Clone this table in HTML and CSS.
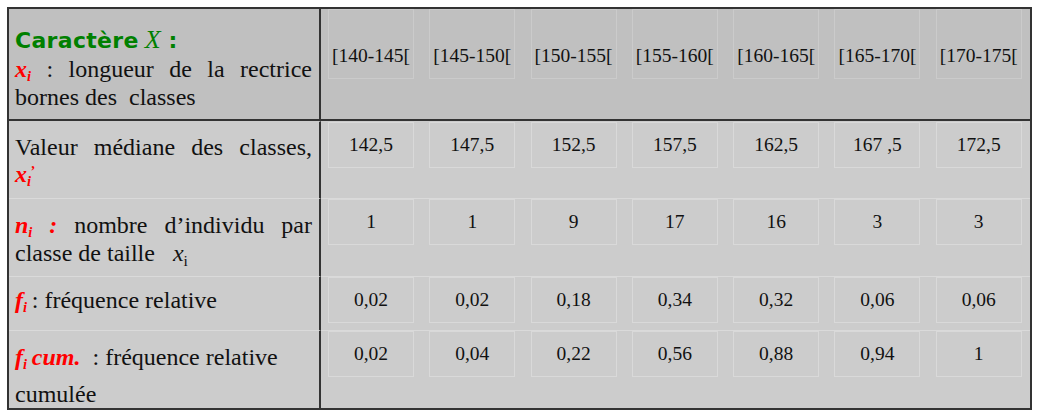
FILE: index.html
```html
<!DOCTYPE html>
<html lang="fr">
<head>
  <meta charset="UTF-8">
  <title>Caractère X</title>
  <link rel="stylesheet" href="styles.css">
</head>
<body>
  <div class="sheet">
    <!-- en-tete : bornes des classes -->
    <div class="cell label head">
      <div class="line title"><span class="comic">Caractère</span> <i class="var-x">X</i><span class="comic"> :</span></div>
      <div class="line fill"><b class="sym">x<sub>i</sub></b> : longueur de la rectrice</div>
      <div class="line">bornes des&nbsp; classes</div>
    </div>
    <div class="cell head"><div class="box">[140-145[</div></div>
    <div class="cell head"><div class="box">[145-150[</div></div>
    <div class="cell head"><div class="box">[150-155[</div></div>
    <div class="cell head"><div class="box">[155-160[</div></div>
    <div class="cell head"><div class="box">[160-165[</div></div>
    <div class="cell head"><div class="box">[165-170[</div></div>
    <div class="cell head"><div class="box">[170-175[</div></div>

    <!-- valeur mediane -->
    <div class="cell label first mid">
      <div class="line fill">Valeur médiane des classes,</div>
      <div class="line"><b class="sym">x<sub>i</sub><sup>’</sup></b></div>
    </div>
    <div class="cell first"><div class="box">142,5</div></div>
    <div class="cell first"><div class="box">147,5</div></div>
    <div class="cell first"><div class="box">152,5</div></div>
    <div class="cell first"><div class="box">157,5</div></div>
    <div class="cell first"><div class="box">162,5</div></div>
    <div class="cell first"><div class="box">167 ,5</div></div>
    <div class="cell first"><div class="box">172,5</div></div>

    <!-- effectifs -->
    <div class="cell label">
      <div class="line fill"><b class="sym">n<sub>i</sub> :</b> nombre d’individu par</div>
      <div class="line">classe de taille&nbsp;&nbsp; <i>x</i><sub class="plain">i</sub></div>
    </div>
    <div class="cell"><div class="box">1</div></div>
    <div class="cell"><div class="box">1</div></div>
    <div class="cell"><div class="box">9</div></div>
    <div class="cell"><div class="box">17</div></div>
    <div class="cell"><div class="box">16</div></div>
    <div class="cell"><div class="box">3</div></div>
    <div class="cell"><div class="box">3</div></div>

    <!-- frequence relative -->
    <div class="cell label short">
      <div class="line"><b class="sym">f<sub>i</sub></b>&thinsp;: fréquence relative</div>
    </div>
    <div class="cell"><div class="box">0,02</div></div>
    <div class="cell"><div class="box">0,02</div></div>
    <div class="cell"><div class="box">0,18</div></div>
    <div class="cell"><div class="box">0,34</div></div>
    <div class="cell"><div class="box">0,32</div></div>
    <div class="cell"><div class="box">0,06</div></div>
    <div class="cell"><div class="box">0,06</div></div>

    <!-- frequence cumulee -->
    <div class="cell label tall">
      <div class="line"><b class="sym">f<sub>i</sub>&thinsp;cum.</b> &nbsp;: fréquence relative</div>
      <div class="line">cumulée</div>
    </div>
    <div class="cell"><div class="box">0,02</div></div>
    <div class="cell"><div class="box">0,04</div></div>
    <div class="cell"><div class="box">0,22</div></div>
    <div class="cell"><div class="box">0,56</div></div>
    <div class="cell"><div class="box">0,88</div></div>
    <div class="cell"><div class="box">0,94</div></div>
    <div class="cell"><div class="box">1</div></div>
  </div>
</body>
</html>
```

FILE: styles.css
```css
body {
  margin: 0;
  background: #fff;
  font-family: "Liberation Serif", "Times New Roman", serif;
  color: #111;
}
.sheet {
  box-sizing: border-box;
  width: 1025px;
  margin: 7px 0 0 7px;
  border: 2px solid #333;
  background: #ccc;
  display: grid;
  grid-template-columns: 312px repeat(7, 1fr);
  grid-template-rows: 112px 77px 78px 54px 78px;
}
.cell {
  box-sizing: border-box;
  border-top: 1px solid #dadada;
}
.cell.first {
  border-top-color: #ccc;
}
.head {
  background: #c0c0c0;
  border-top: 0;
  border-bottom: 2px solid #333;
}
.label {
  border-right: 2px solid #333;
  padding: 12px 7px 0 6px;
  font-size: 24px;
  line-height: 28px;
}
.label.head {
  padding-top: 17px;
}
.label.mid {
  line-height: 27px;
}
.label.short {
  padding-top: 9px;
}
.label.tall {
  padding-top: 8px;
  line-height: 37px;
}
.line {
  white-space: nowrap;
}
.fill {
  text-align: justify;
  text-align-last: justify;
}
.title {
  color: #008000;
}
.comic {
  font-family: "DejaVu Sans", sans-serif;
  font-weight: bold;
  font-size: 22px;
  letter-spacing: 0.3px;
}
.var-x {
  font-size: 26px;
}
.sym {
  color: #f00;
  font-style: italic;
}
sub, sup {
  line-height: 0;
  font-size: 0.6em;
}
sub {
  vertical-align: -0.3em;
}
sup {
  vertical-align: 0.45em;
  margin-left: -1px;
}
sub.plain {
  font-size: 0.65em;
}
.box {
  box-sizing: border-box;
  width: 86px;
  height: 46px;
  margin-left: 7px;
  border: 1px solid #d9d9d9;
  display: flex;
  align-items: center;
  justify-content: center;
  font-size: 19.5px;
}
.head .box {
  height: 70px;
  padding-top: 24px;
  border-color: #cbcbcb;
}
```
